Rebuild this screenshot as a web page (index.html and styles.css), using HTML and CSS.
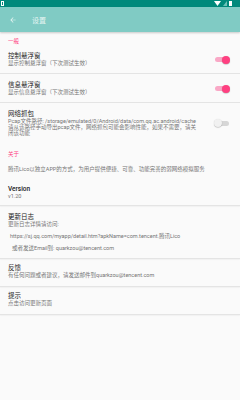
FILE: index.html
```html
<!DOCTYPE html>
<html>
<head>
    <meta charset="UTF-8">
    <title>设置</title>
    <link rel="stylesheet" href="styles.css">
</head>
<body>
    <div class="statusbar">
        <span class="notify"></span>
        <div class="status_icons">
            <svg width="7" height="5" viewBox="0 0 7 5"><path d="M0 0 L7 0 L3.5 5 Z" fill="#fff"/></svg>
            <svg width="4" height="5" viewBox="0 0 4 5"><path d="M0 5 L4 0 L4 5 Z" fill="#6cc2b8"/></svg>
            <span class="battery"></span>
        </div>
    </div>
    <header class="appbar">
        <svg class="back" width="8" height="8" viewBox="0 0 24 24"><path d="M20 11H7.8l5.6-5.6L12 4l-8 8 8 8 1.4-1.4L7.8 13H20z" fill="#e6f5f3"/></svg>
        <h1>设置</h1>
    </header>
    <main class="prefs">
        <div class="category">一般</div>
        <div class="item">
            <div class="item_text">
                <div class="title">控制悬浮窗</div>
                <div class="summary">显示控制悬浮窗（下次测试生效）</div>
            </div>
            <span class="switch on"></span>
        </div>
        <div class="divider"></div>
        <div class="item">
            <div class="item_text">
                <div class="title">信息悬浮窗</div>
                <div class="summary">显示信息悬浮窗（下次测试生效）</div>
            </div>
            <span class="switch on"></span>
        </div>
        <div class="divider"></div>
        <div class="item">
            <div class="item_text">
                <div class="title">网络抓包</div>
                <div class="summary long">Pcap文件路径: /storage/emulated/0/Android/data/com.qq.ac.android/cache<br>请从该路径手动导出pcap文件，网络抓包可能会影响性能，如果不需要，请关闭该功能</div>
            </div>
            <span class="switch"></span>
        </div>

        <div class="category about">关于</div>
        <div class="item intro">
            <div class="summary">腾讯Lico以独立APP的方式，为用户提供便捷、可靠、功能完善的弱网络模拟服务</div>
        </div>
        <div class="item version">
            <div class="item_text">
                <div class="title">Version</div>
                <div class="summary">v1.20</div>
            </div>
        </div>
        <div class="divider thick"></div>
        <div class="item changelog">
            <div class="item_text">
                <div class="title">更新日志</div>
                <div class="summary">更新日志详情请访问:</div>
                <div class="summary link">https://sj.qq.com/myapp/detail.htm?apkName=com.tencent.腾讯Lico</div>
                <div class="summary mail">或者发送Email到: quarkzou@tencent.com</div>
            </div>
        </div>
        <div class="divider thick"></div>
        <div class="item feedback">
            <div class="item_text">
                <div class="title">反馈</div>
                <div class="summary">有任何问题或者建议，请发送邮件到quarkzou@tencent.com</div>
            </div>
        </div>
        <div class="divider thick"></div>
        <div class="item tips">
            <div class="item_text">
                <div class="title">提示</div>
                <div class="summary">点击访问更新页面</div>
            </div>
        </div>
        <div class="divider thick"></div>
    </main>
</body>
</html>
```

FILE: styles.css
```css
body {
    margin: 0;
    width: 240px;
    height: 400px;
    background-color: #fafafa;
    font-family: Roboto, "Noto Sans CJK SC", sans-serif;
    overflow: hidden;
}

:root {
    --clr-teal-dark: #00897b;
    --clr-teal: #80cbc4;
    --clr-pink: #ff4081;
}

.statusbar {
    height: 7px;
    background-color: var(--clr-teal-dark);
    display: flex;
    align-items: center;
    justify-content: space-between;
    padding: 0 8px 0 1px;
}

.notify {
    width: 3px;
    height: 5px;
    border: 1px solid #fff;
    box-sizing: border-box;
}

.status_icons {
    display: flex;
    align-items: center;
    gap: 2px;
}

.battery {
    width: 3px;
    height: 5px;
    background-color: #fff;
}

.appbar {
    height: 25px;
    background-color: var(--clr-teal);
    display: flex;
    align-items: center;
    padding-left: 9px;
    box-shadow: 0 1px 2px rgba(0, 0, 0, 0.2);
    position: relative;
}

.appbar h1 {
    margin: 0 0 0 15px;
    font-size: 7px;
    font-weight: 400;
    color: #e6f5f3;
}

.category {
    color: var(--clr-pink);
    font-size: 5.5px;
    line-height: 7px;
    padding: 6px 0 0 8px;
}

.category.about {
    padding-top: 9px;
}

.item {
    display: flex;
    align-items: center;
    padding: 7px 0 6px 8px;
}

.item_text {
    flex: 1;
    min-width: 0;
}

.title {
    font-size: 6.5px;
    line-height: 8px;
    color: #212121;
}

.summary {
    font-size: 5.5px;
    line-height: 7px;
    color: #757575;
}

.summary.long {
    line-height: 6px;
    padding-right: 12px;
}

.intro {
    padding: 8px 0 6px 8px;
}

.version {
    padding: 6px 0 5px 8px;
}

.version .title {
    font-weight: 500;
}

.changelog .link {
    margin: 5px 0 0 2px;
}

.changelog .mail {
    margin: 5px 0 0 4px;
}

.feedback {
    padding: 5px 0 7px 8px;
}

.tips {
    padding: 5px 0 7px 8px;
}

.divider {
    height: 1px;
    background-color: #e4e4e4;
}

.divider.thick {
    box-shadow: 0 1px 1px rgba(0, 0, 0, 0.04);
}

.switch {
    position: relative;
    width: 14px;
    height: 5px;
    border-radius: 3px;
    background-color: #d6d6d6;
    margin: 0 11px 0 4px;
    flex-shrink: 0;
}

.switch::after {
    content: "";
    position: absolute;
    top: -1.5px;
    left: -1px;
    width: 8px;
    height: 8px;
    border-radius: 50%;
    background-color: #f1f1f1;
    box-shadow: 0 0.5px 1px rgba(0, 0, 0, 0.3);
}

.switch.on {
    background-color: #f9a8c6;
}

.switch.on::after {
    left: auto;
    right: -1px;
    background-color: var(--clr-pink);
}
```
